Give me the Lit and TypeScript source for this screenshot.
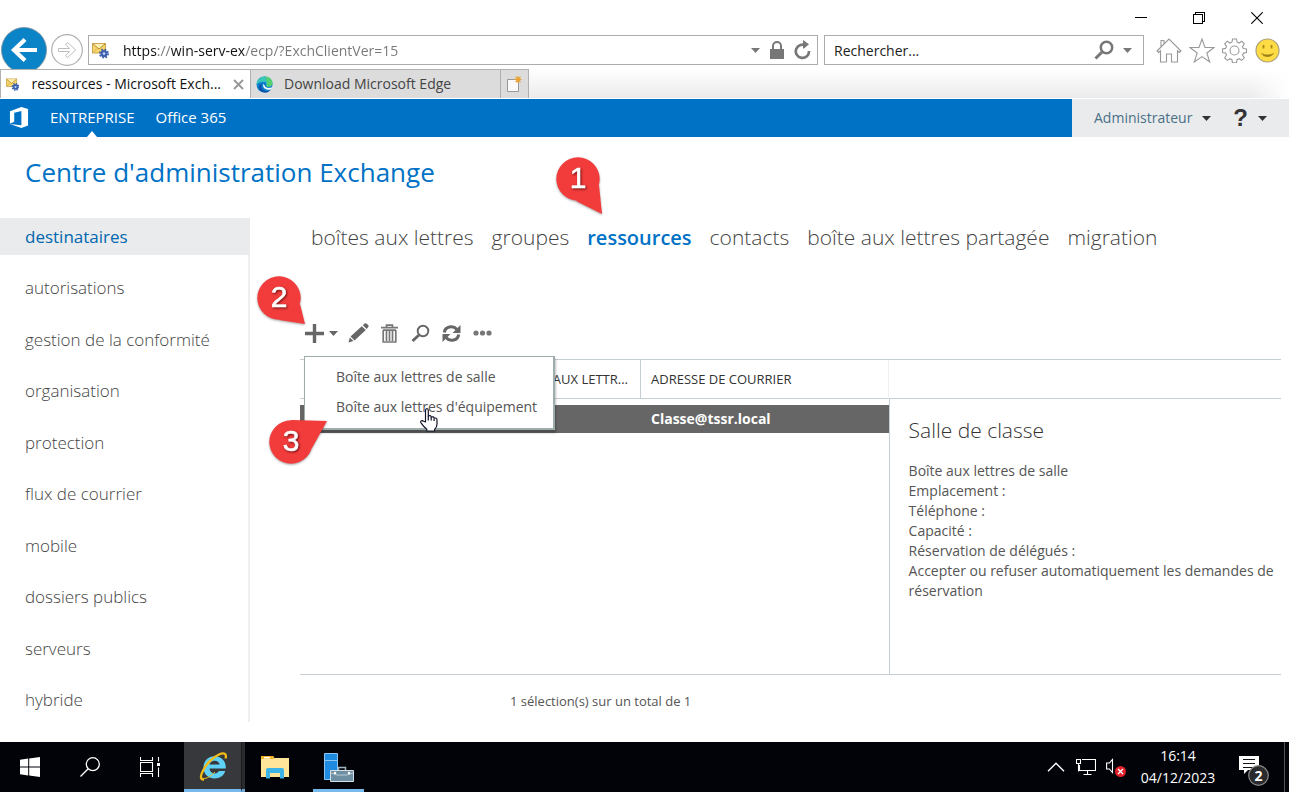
import { LitElement, html, css, svg, nothing } from "lit";
import { customElement, property, state } from "lit/decorators.js";
import { classMap } from "lit/directives/class-map.js";

const NAV = [
  "destinataires",
  "autorisations",
  "gestion de la conformité",
  "organisation",
  "protection",
  "flux de courrier",
  "mobile",
  "dossiers publics",
  "serveurs",
  "hybride",
];

const TABS = [
  "boîtes aux lettres",
  "groupes",
  "ressources",
  "contacts",
  "boîte aux lettres partagée",
  "migration",
];

const DETAILS = [
  "Boîte aux lettres de salle",
  "Emplacement :",
  "Téléphone :",
  "Capacité :",
  "Réservation de délégués :",
  "Accepter ou refuser automatiquement les demandes de réservation",
];

const mailIcon = html`<svg width="17" height="17" viewBox="0 0 17 17" aria-hidden="true">
  <rect x="0.5" y="1.5" width="13" height="9.5" fill="#f6d56a" stroke="#c9a551"/>
  <path d="M1 2l6 5 6-5" fill="#fdf0b4" stroke="#b98d2c"/>
  <path d="M1 10.5l4-4M13 10.500l-4-4" stroke="#d8b35a" fill="none"/>
  <circle cx="12" cy="11.6" r="3.6" fill="#3c62b0"/>
  <circle cx="12" cy="11.6" r="4.2" fill="none" stroke="#3a5ca3" stroke-width="1.600" stroke-dasharray="1.7 1.6"/>
  <circle cx="12" cy="11.6" r="1.3" fill="#c3d3f0"/>
</svg>`;

const edgeIcon = html`<svg width="17" height="17" viewBox="0 0 17 17" aria-hidden="true">
  <circle cx="8.5" cy="8.5" r="8" fill="#0f7fd0"/>
  <path d="M.6 9C.6 4 4 .5 8.6.5c4.600 0 7.900 3 7.900 6.600 0 2.400-1.800 3.700-3.700 3.700-2 0-2.900-.7-2.400-1.500.7-1.100.2-3.600-2.700-3.600C4.500 5.700 1.500 6.500.6 9z" fill="#37c6b8"/>
  <path d="M9 .5c4.200 0 7.500 3 7.500 6.600 0 2.400-1.800 3.700-3.700 3.700-2 0-2.900-.7-2.400-1.500C11 7 12 4 9 .5z" fill="#54cf72"/>
  <path d="M6 8c-1.500 3 .5 6.500 4 7 2 .3 4-.3 5.200-1.600-1.600 2.200-4 3.200-6.700 3.100C4.500 16.300 2 12.500 3 10c.6-1.300 1.800-2 3-2z" fill="#0b52a5"/>
  <path d="M7.300 8c-.8 2.700 1.200 5.500 4.700 5.700 1.700.1 2.800-.5 3.600-1l.6-1.500c-3 1.300-7.300 1-7.600-1.700z" fill="#fff"/>
</svg>`;

const caret = (size: number) => html`<svg width=${size} height="5" viewBox="0 0 10 5" preserveAspectRatio="none" aria-hidden="true"><path d="M0 0h10L5 5z" fill="currentColor"/></svg>`;

@customElement("step-callout")
export class StepCallout extends LitElement {
  @property() step = "";
  @property() tail = "";

  static styles = css`
    :host { display: block; width: 80px; height: 80px; pointer-events: none; }
    svg { display: block; overflow: visible; filter: drop-shadow(0 1px 1px rgba(0, 0, 0, 0.35)); }
    .shape { fill: #f23b3b; }
    .digit { font: 30px "Liberation Sans", Arial, sans-serif; fill: #fff; stroke: #fff; stroke-width: 0.6; text-anchor: middle; filter: drop-shadow(1px 1px 1px rgba(60, 0, 0, 0.7)); }
  `;

  render() {
    return html`<svg width="80" height="80" viewBox="0 0 80 80">
      <circle class="shape" cx="40" cy="40" r="21.700"/>
      <polygon class="shape" points=${this.tail}/>
      ${svg`<text class="digit" x="40" y="49">${this.step}</text>`}
    </svg>`;
  }
}

@customElement("browser-chrome")
export class BrowserChrome extends LitElement {
  static styles = css`
    :host { display: block; background: #fff; color: #111; font: 14px/20px "Open Sans", "Segoe UI", sans-serif; }
    * { box-sizing: border-box; }
    button { display: grid; place-items: center; flex: none; border: 0; padding: 0; margin: 0; background: none; color: #777; font: inherit; }
    svg { display: block; }
    .title { display: flex; justify-content: flex-end; height: 35px; padding-right: 3px; }
    .title button { width: 58px; height: 35px; }
    .address-row { display: flex; align-items: center; height: 34px; padding: 0 5px 4px 1px; }
    .back { width: 46px; height: 46px; margin: -8px 4px -8px 0; }
    .forward { width: 32px; margin-right: 5px; }
    .box { display: flex; align-items: center; height: 30px; border: 1px solid #acacac; background: #fff; }
    .url { flex: 1; padding: 0 6px 0 3px; gap: 8px; }
    .find { width: 320px; margin-left: 6px; padding: 0 11px 0 9px; gap: 9px; }
    input { flex: 1; min-width: 0; height: 26px; border: 0; outline: 0; padding: 0; background: none; color: #222; font: inherit; }
    input::placeholder { color: #222; opacity: 1; }
    .url input {
      margin-left: 6px;
      color: #777;
      -webkit-text-fill-color: transparent;
      background: linear-gradient(90deg, #111 34px, #777 34px 48px, #111 48px 122px, #777 122px);
      -webkit-background-clip: text;
      background-clip: text;
    }
    .tools { display: flex; margin-left: 8px; }
    .tools button { width: 33px; }
    .tabs { position: relative; display: flex; height: 29px; margin-bottom: 1px; background: linear-gradient(90deg, transparent calc(100% - 40px), #fff), linear-gradient(#fff, #ebebeb); }
    .tab { display: flex; align-items: center; gap: 9px; width: 250px; padding: 0 6px; border: 1px solid #b0b0b0; border-width: 1px 1px 0 0; background: #dcdcdc; color: #444; }
    .tab.current { width: 251px; gap: 12px; background: #fff; color: #111; border-left-width: 1px; padding-left: 5px; }
    .tab span { flex: 1; white-space: nowrap; }
    .tab.other { gap: 11px; padding-left: 5px; }
    .new-tab { width: 28px; border: 1px solid #b0b0b0; border-width: 1px 1px 0 0; background: #dcdcdc; }
  `;

  render() {
    return html`
      <div class="title">
        <button aria-label="Réduire"><svg width="12" height="12" viewBox="0 0 12 12" shape-rendering="crispEdges"><path d="M0 5.500h12" stroke="#000"/></svg></button>
        <button aria-label="Restaurer"><svg width="12" height="12" viewBox="0 0 12 12" fill="none" stroke="#000" shape-rendering="crispEdges"><path d="M.5 2.500h9v9h-9zM2.500 2.500v-2h9v9h-2"/></svg></button>
        <button aria-label="Fermer"><svg width="12" height="12" viewBox="0 0 12 12" stroke="#000" stroke-width="1.100"><path d="M.3.3l11.400 11.400M11.700.3L.3 11.700"/></svg></button>
      </div>
      <div class="address-row">
        <button class="back" aria-label="Précédent"><svg width="46" height="46" viewBox="0 0 46 46">
          <circle cx="23" cy="23" r="22.500" fill="#0a84c6" stroke="#7c8c96" stroke-width=".8"/>
          <path d="M36 23H14M24 12.500L13 23l11 10.500" stroke="#fff" stroke-width="4.200" fill="none"/>
        </svg></button>
        <button class="forward" aria-label="Suivant"><svg width="32" height="32" viewBox="0 0 32 32" fill="none" stroke="#bdbdbd">
          <circle cx="16" cy="16" r="15.300" stroke="#b0b0b0" stroke-width="1.200"/>
          <path d="M7.500 14.500h11l-4-4.300 2.200-1.700 8 7.500-8 7.500-2.200-1.700 4-4.300h-11z"/>
        </svg></button>
        <div class="box url">
          ${mailIcon}
          <input aria-label="Adresse" .value=${"https://win-serv-ex/ecp/?ExchClientVer=15"} />
          <button aria-label="Historique">${caret(9)}</button>
          <button aria-label="Certificat"><svg width="18" height="18" viewBox="1 0 18 18"><path d="M3 8h14v10H3z" fill="#777"/><path d="M6 9V5a4 4 0 0 1 8 0v4" fill="none" stroke="#777" stroke-width="2"/></svg></button>
          <button aria-label="Actualiser"><svg width="17" height="20" viewBox="0 0 17 20"><path d="M12 5.800A6.600 6.600 0 1 0 15 11" fill="none" stroke="#777" stroke-width="2.700"/><path d="M9 0v8.400h1L15 4.200z" fill="#777"/></svg></button>
        </div>
        <div class="box find">
          <input aria-label="Rechercher" placeholder="Rechercher..." />
          <button aria-label="Lancer la recherche"><svg width="20" height="20" viewBox="0 0 20 20" fill="none" stroke="#777"><circle cx="12.500" cy="7.500" r="5.700" stroke-width="2.500"/><path d="M8.500 11.500L1.500 18.500" stroke-width="3"/></svg></button>
          <button aria-label="Moteurs">${caret(9)}</button>
        </div>
        <div class="tools">
          <button aria-label="Accueil"><svg width="26" height="25" viewBox="0 0 26 25" fill="#fff" stroke="#999" stroke-width="1.100"><path d="M1 13L13 1l12 12-1.700 1.500-1.800-1.700V24h-6v-8h-5v8h-6V12.800l-1.800 1.700zM5 8.500V2.500h3v3"/></svg></button>
          <button aria-label="Favoris"><svg width="26" height="25" viewBox="0 0 26 25" fill="#fff" stroke="#999" stroke-width="1.100"><path d="M13 1l3 8.500h9L17.800 15l2.900 9L13 18.600 5.300 24l2.900-9L1 9.500h9z"/></svg></button>
          <button aria-label="Outils"><svg width="25" height="25" viewBox="0 0 25 25" fill="none" stroke="#999" stroke-width="1.100"><circle cx="12.500" cy="12.500" r="4.500"/><path d="M10.500 1h4l.5 3 2 1 2.700-1.800 2.600 2.600L20.500 8.500l.8 2 3.200.5v3.500l-3 .6-1 2.200 1.800 2.500-2.600 2.600-2.500-1.700-2.200 1-.5 3h-4l-.6-3-2-1-2.600 1.700-2.600-2.600L4.500 17l-.9-2-3.100-.5V11l3-.6 1-2-1.800-2.600L5.300 3.200 8 5l2-1z"/></svg></button>
          <button aria-label="Commentaires"><svg width="25" height="25" viewBox="0 0 25 25"><circle cx="12.500" cy="12.500" r="11.500" fill="#ffdc45" stroke="#aaa07c" stroke-width="1.200"/><path d="M8.500 7v3.500M16.500 7v3.500" stroke="#a88a1a" stroke-width="1.800"/><path d="M6.500 15.500c3 4 9 4 12 0-3 2-9 2-12 0z" fill="#8a7420" stroke="#a88a1a"/></svg></button>
        </div>
      </div>
      <div class="tabs">
        <div class="tab current">${mailIcon}<span>ressources - Microsoft Exch...</span>
          <button aria-label="Fermer l'onglet"><svg width="11" height="11" viewBox="0 0 11 11" stroke="#999" stroke-width="2"><path d="M1 1l9 9M10 1L1 10"/></svg></button></div>
        <div class="tab other">${edgeIcon}<span>Download Microsoft Edge</span></div>
        <button class="new-tab" aria-label="Nouvel onglet"><svg width="17" height="17" viewBox="0 0 17 17"><path d="M1.500 3.500h11v12h-11z" fill="#fafafa" stroke="#999"/><path d="M12 0v7M8.500 3.500h7M9.500 1l5 5M14.500 1l-5 5" stroke="#e8a12c" stroke-width="1.200"/></svg></button>
      </div>
    `;
  }
}

@customElement("task-bar")
export class TaskBar extends LitElement {
  static styles = css`
    :host { display: flex; justify-content: space-between; height: 50px; background: #010308; color: #fff; font: 14px/22px "Open Sans", "Segoe UI", sans-serif; }
    * { box-sizing: border-box; }
    button { display: grid; place-items: center; border: 0; padding: 0; background: none; color: inherit; font: inherit; }
    svg { display: block; }
    .apps, .tray { display: flex; }
    .apps button { width: 60px; height: 50px; }
    .apps .ie { width: 57px; margin-left: 4px; background: #37383b; border-bottom: 3px solid #76b9ed; padding: 2px 0 0 2px; }
    .apps .stack { width: 4px; background: #2a2b2e; border-bottom: 3px solid #6aa5d4; border-left: 1px solid #1a1a1c; }
    .apps .open { width: 51px; margin-left: 8px; border-bottom: 3px solid #76b9ed; padding-top: 4px; }
    .tray button { height: 50px; width: 30px; }
    .tray .clock { width: 88px; margin-left: 3px; text-align: center; white-space: pre-line; }
    .tray .notes { width: 60px; padding-left: 4px; margin-right: 2px; }
    .edge { width: 5px; border-left: 1px solid #555; }
  `;

  render() {
    return html`
      <div class="apps">
        <button aria-label="Démarrer"><svg width="20" height="20" viewBox="0 0 20 20" fill="#fff"><path d="M0 2.800L8.200 1.600v7.900H0zM9.200 1.500L20 0v9.500H9.200zM0 10.500h8.200v7.900L0 17.200zM9.200 10.500H20V20L9.200 18.500z"/></svg></button>
        <button aria-label="Rechercher"><svg width="20" height="20" viewBox="0 0 20 20" fill="none" stroke="#fff" stroke-width="1.300"><circle cx="12.800" cy="7.200" r="6.500"/><path d="M8.200 11.800L.5 19.500"/></svg></button>
        <button aria-label="Affichage des tâches"><svg width="21" height="20" viewBox="0 0 21 20" fill="none" stroke="#fff" stroke-width="1.100"><path d="M.5 0v3.500h12V0M.5 20v-3.500h12V20M.5 5.500h12v9H.5zM18.500 0v4.500M18.500 10.500V20"/><path d="M17 6h3v3h-3z" fill="#fff" stroke="none"/></svg></button>
        <button class="ie" aria-label="Internet Explorer"><svg width="30" height="30" viewBox="0 0 30 30" fill="none">
          <path d="M26.800 16.500H10.500c.2 3 2.200 4.900 5.200 4.900 2 0 3.400-.8 4.200-2.300h6.300c-1.400 4.700-5.300 7.500-10.500 7.500-6.500 0-11.200-4.400-11.200-11S9.200 4.300 15.600 4.300s11.200 4.500 11.200 10.900zM20.600 12.600c-.3-2.400-2.200-3.900-5-3.900-2.700 0-4.700 1.500-5.100 3.900z" fill="#5fd0f6"/>
          <path d="M5 27.500c-3.500.3-4-3-1.300-8.300C7 12 14 5 20 2.500c5-2.200 8-1 6.500 4" stroke="#f5bd17" stroke-width="2.300"/>
          <path d="M4.500 26.500C8 27 13 23 16 20" stroke="#f5bd17" stroke-width="1"/>
        </svg></button><span class="stack"></span>
        <button aria-label="Explorateur de fichiers"><svg width="28" height="24" viewBox="0 0 28 24"><path d="M0 1h12l1.500 2H28v19H0z" fill="#fee59a"/><path d="M0 1h12l1.500 3H0z" fill="#f3b52c"/><path d="M3 2h6v1.500H3z" fill="#fff"/><path d="M5 23.500V15q0-2 2-2h14q2 0 2 2v8.500h-4V18h-10v5.500z" fill="#3cb4e7"/></svg></button>
        <button class="open" aria-label="Gestionnaire de serveur"><svg width="30" height="30" viewBox="0 0 30 30"><path d="M.5.5h13v26H.5z" fill="#1e8ae0" stroke="#8dc6f3"/><path d="M1 7.500h12" stroke="#8dc6f3"/><path d="M14.500 17v-2.500h7V17" stroke="#9fb4c0" stroke-width="1.500" fill="none"/><path d="M6.500 17.500h23v11h-23z" fill="#6e8ea2" stroke="#d4e0e8"/><path d="M7 20l6 2h10l6-2" stroke="#b9cbd6" fill="none"/><circle cx="11" cy="20" r="1.300" fill="#fff"/><circle cx="25" cy="20" r="1.300" fill="#fff"/></svg></button>
      </div>
      <div class="tray">
        <button aria-label="Icônes cachées"><svg width="18" height="10" viewBox="0 0 18 10" fill="none" stroke="#fff" stroke-width="1.400"><path d="M1 9.300l8-8 8 8"/></svg></button>
        <button aria-label="Réseau"><svg width="20" height="18" viewBox="0 0 20 18" fill="none" stroke="#fff" stroke-width="1.100"><path d="M6 1.500h13.500v11h-16V7M11.500 13v3.500M7.500 16.500h8M.5 1.500h4v4h-4zM2.500 5.500v8"/></svg></button>
        <button aria-label="Volume"><svg width="20" height="20" viewBox="0 0 20 20" fill="none"><path d="M.6 6h2.800L6.500 2.500v13L3.400 12H.6z" stroke="#fff" stroke-width="1.100"/><circle cx="14.500" cy="14.500" r="5.500" fill="#e1202c"/><path d="M12 12l5 5M17 12l-5 5" stroke="#fff" stroke-width="1.300"/></svg></button>
        <button class="clock">16:14
04/12/2023</button>
        <button class="notes" aria-label="Notifications"><svg width="31" height="24" viewBox="0 4 31 24" overflow="visible"><path d="M0 5h20v14H9l-4 4v-4H0z" fill="#fff"/><path d="M4 8.500h12M4 12.500h12M4 16.500h12" stroke="#111"/><circle cx="19.500" cy="24.500" r="9.800" fill="#2b2b2d" stroke="#8b8b8b" stroke-width="1.200"/><text x="19.500" y="29.500" text-anchor="middle" font-family="Open Sans" font-weight="700" font-size="14" fill="#fff">2</text></svg></button>
        <span class="edge"></span>
      </div>
    `;
  }
}

@customElement("app-root")
export class AppRoot extends LitElement {
  @state() private section = NAV[0];
  @state() private tab = TABS[2];

  static styles = css`
    :host { display: flex; flex-direction: column; min-height: 100vh; background: #fff; color: #555; font: 14px/20px "Open Sans", "Segoe UI", sans-serif; }
    * { box-sizing: border-box; }
    ul { list-style: none; margin: 0; padding: 0; }
    a { color: inherit; text-decoration: none; }
    button { border: 0; padding: 0; margin: 0; background: none; color: inherit; font: inherit; }
    svg { display: block; }
    .suite { display: flex; height: 38px; background: #0072c6; color: #fff; font-size: 15px; }
    .suite nav { display: flex; flex: 1; align-items: center; gap: 21px; padding: 0 0 2px 9px; }
    .suite nav a { position: relative; }
    .suite nav a.here::after { content: ""; position: absolute; left: 50%; top: 24px; border: 5px solid transparent; border-bottom: 6px solid #fff; border-top-width: 0; transform: translateX(-50%); }
    .user { display: flex; align-items: center; gap: 22px; width: 217px; padding-left: 22px; background: #eaebec; color: #333; font-size: 14px; }
    .user button { display: flex; align-items: center; gap: 10px; color: #333; }
    .user .name { color: #4b7188; }
    .user .help { font: bold 24px/24px "Liberation Sans", Arial, sans-serif; }
    h1 { height: 81px; margin: 0; padding: 17px 25px 0; color: #0072c6; font-size: 26px; line-height: 36px; font-weight: 400; }
    .body { display: flex; flex: 1; }
    .side { display: flex; flex-direction: column; justify-content: space-between; width: 250px; flex: none; margin-bottom: 20px; padding-bottom: 4px; border-right: 2px solid #eeefef; }
    .side a { display: block; height: 37px; padding-left: 25px; font-size: 17px; line-height: 37px; font-weight: 300; color: #444; }
    .side a.here { margin-right: -2px; background: #eaebec; color: #0067b0; font-weight: 400; }
    .main { display: flex; flex-direction: column; flex: 1; min-width: 0; padding: 0 8px 0 50px; }
    .tabs { display: flex; gap: 18px; padding-left: 11px; font-size: 21px; line-height: 38px; font-weight: 300; color: #444; white-space: nowrap; }
    .tabs li { position: relative; }
    .tabs .here { color: #0072c6; font-size: 20px; font-weight: 600; }
    step-callout { position: absolute; z-index: 3; }
    .on-tab { left: -49px; top: -79px; }
    .on-new { left: -65px; top: -63px; }
    .on-menu { left: -54px; top: 45px; }
    .toolbar { position: relative; display: flex; height: 24px; margin: 64px 0 14px 4px; color: #666; }
    .toolbar button { display: grid; place-items: center; width: 31px; height: 24px; }
    .toolbar .new { display: flex; align-items: center; gap: 5px; width: 39px; padding-left: 1px; }
    .menu { position: absolute; z-index: 2; left: 0; top: 35px; width: 251px; padding: 5px 0 6px; border: 1px solid #9cadab; border-width: 1px 2px 2px 1px; background: #fff; box-shadow: 1px 3px 2px rgba(0, 0, 0, 0.25); }
    .menu a { display: block; padding-left: 31px; line-height: 30px; color: #555; white-space: nowrap; }
    .cursor { position: absolute; z-index: 4; left: 115px; top: 51px; }
    .panel { display: grid; grid-template-columns: 3fr 2fr; flex: 1; border: 1px solid #c5ced2; border-width: 1px 0; }
    table { width: 100%; table-layout: fixed; border-spacing: 0; border-collapse: separate; text-align: left; }
    .list { min-width: 0; }
    .c1 { width: 153px; }
    .c2 { width: 188px; }
    th { height: 39px; padding: 0 0 0 10px; border-bottom: 1px solid #c5ced2; border-right: 1px solid #c5ced2; color: #333; font-size: 13px; font-weight: 400; white-space: nowrap; overflow: hidden; }
    th:nth-child(2) { padding-right: 12px; text-align: right; }
    th:last-child { border-right-color: #eef0f2; }
    tbody::before { content: ""; display: block; height: 6px; }
    td { height: 28px; padding: 0 0 0 10px; background: #666; color: #fff; font-weight: 700; white-space: nowrap; }
    .detail { display: flex; flex-direction: column; }
    .detail header { height: 39px; border-bottom: 1px solid #c5ced2; }
    .detail section { flex: 1; padding: 16px 0 0 19px; border-left: 1px solid #c5ced2; }
    h2 { margin: 0 0 16px; color: #333; font-size: 21px; line-height: 30px; font-weight: 300; }
    .detail p { margin: 0; }
    .status { height: 67px; margin: 0; padding: 16px 0 0 210px; font-size: 13px; }
  `;

  private pick(e: Event, apply: () => void) {
    e.preventDefault();
    apply();
  }

  render() {
    return html`
      <browser-chrome></browser-chrome>
      <div class="suite">
        <nav aria-label="Office">
          <svg width="20" height="23" viewBox="0 0 21 24" aria-hidden="true"><path d="M1 5.500L13 1l7 2v17.500L13 23 1 18.700l12 1.500V5.200L5.500 7v9.500L1 18.500z" fill="#fff"/></svg>
          <a class="here" href="#">ENTREPRISE</a>
          <a href="#">Office 365</a>
        </nav>
        <div class="user">
          <button><span class="name">Administrateur</span>${caret(9)}</button>
          <button><span class="help">?</span>${caret(9)}</button>
        </div>
      </div>
      <h1>Centre d'administration Exchange</h1>
      <div class="body">
        <nav class="side" aria-label="Sections">
          ${NAV.map((n) => html`<a href="#" class=${classMap({ here: n === this.section })} @click=${(e: Event) => this.pick(e, () => (this.section = n))}>${n}</a>`)}
        </nav>
        <main class="main">
          <ul class="tabs">
            ${TABS.map((t, i) => html`<li>
              <a href="#" class=${classMap({ here: t === this.tab })} @click=${(e: Event) => this.pick(e, () => (this.tab = t))}>${t}</a>
              ${i === 2 ? html`<step-callout class="on-tab" step="1" tail="61,46 64,75 38,62"></step-callout>` : nothing}
            </li>`)}
          </ul>
          <div class="toolbar">
            <button class="new" aria-label="Nouveau"><svg width="19" height="19" viewBox="0 0 19 19"><path d="M7.800 0h3.400v7.800H19v3.400h-7.800V19H7.800v-7.800H0V7.800h7.800z" fill="#666"/></svg>${caret(9)}</button>
            <button aria-label="Modifier"><svg width="21" height="20" viewBox="0 0 21 20" fill="#666"><path d="M13.800 3.200l4 3.800L6.500 17.500l-4-4zM14.800 2.200l1.500-1.500q1.300-1 2.500 0l1.300 1.300q1 1.200 0 2.300l-1.400 1.600zM1.800 14.500l3.600 3.500L.5 19.500z"/></svg></button>
            <button aria-label="Supprimer"><svg width="17" height="19" viewBox="0 0 17 19" fill="none" stroke="#777" stroke-width="1.700"><path d="M0 3.700h17M5.500 3V1.200h6V3M2.200 6v12h12.600V6M5.500 6v11M8.500 6v11M11.500 6v11M2 6.200h13"/></svg></button>
            <button aria-label="Rechercher"><svg width="19" height="19" viewBox="0 0 19 19" fill="none" stroke="#666"><circle cx="12" cy="7" r="5.300" stroke-width="1.900"/><path d="M8 11L1.500 17" stroke-width="2.800"/></svg></button>
            <button aria-label="Actualiser"><svg width="19" height="19" viewBox="0 0 19 19" fill="none" stroke="#666" stroke-width="3"><path d="M2.300 8.500C3 2.500 11 .8 14.800 5.300M16.700 10.500C16 16.500 8 18.200 4.200 13.700"/><path d="M18.500 1v8h-8zM.5 18v-8h8z" fill="#666" stroke="none"/></svg></button>
            <button aria-label="Plus"><svg width="19" height="6" viewBox="0 0 19 6" fill="#777"><circle cx="3" cy="3" r="2.600"/><circle cx="9.500" cy="3" r="2.600"/><circle cx="16" cy="3" r="2.600"/></svg></button>
            <step-callout class="on-new" step="2" tail="61,46 66,66 40,62"></step-callout>
            <div class="menu">
              <a href="#">Boîte aux lettres de salle</a>
              <a href="#">Boîte aux lettres d'équipement</a>
              <svg class="cursor" width="18" height="24" viewBox="0 0 18 24" fill="#fff" stroke="#15152a" stroke-width="1.200" stroke-linejoin="round"><path d="M5.500 14V2.600q0-1.900 1.400-1.900t1.400 1.900V8q2.700-.9 2.900 1 2.600-.7 2.900 1.100 2.600-.5 2.900 1.500v4.500q0 3.500-2.400 5.200v1.700H6.800v-1.700Q4 19 1 14.800q-.8-1.500.4-2.100 1.100-.4 2.200.6z"/><path d="M8.300 8v4.500M11.200 9v3.500M14.100 10.500V13" fill="none"/></svg>
              <step-callout class="on-menu" step="3" tail="40,18 76,19 61,46"></step-callout>
            </div>
          </div>
          <div class="panel">
            <div class="list">
              <table>
                <colgroup><col class="c1" /><col class="c2" /><col /></colgroup>
                <thead><tr><th></th><th>AUX LETTR...</th><th>ADRESSE DE COURRIER</th></tr></thead>
                <tbody><tr><td></td><td></td><td>Classe@tssr.local</td></tr></tbody>
              </table>
            </div>
            <div class="detail">
              <header></header>
              <section>
                <h2>Salle de classe</h2>
                ${DETAILS.map((d) => html`<p>${d}</p>`)}
              </section>
            </div>
          </div>
          <p class="status">1 sélection(s) sur un total de 1</p>
        </main>
      </div>
      <task-bar></task-bar>
    `;
  }
}
